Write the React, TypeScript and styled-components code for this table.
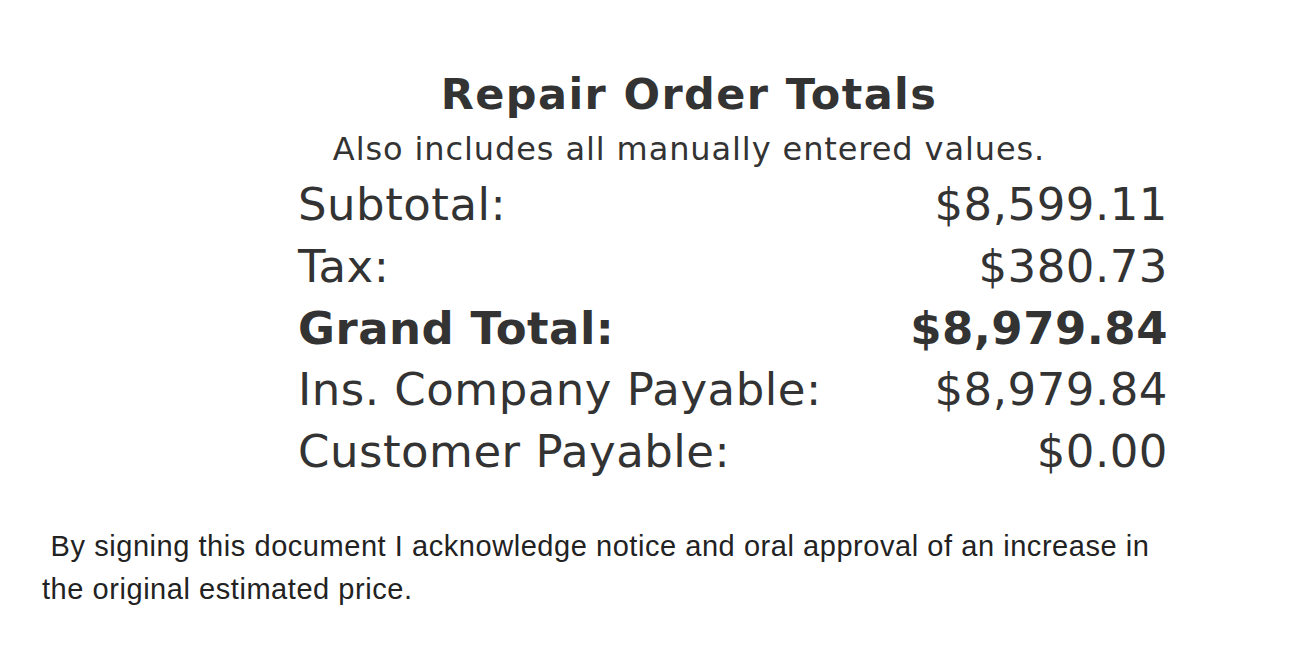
import React from 'react';
import styled, { createGlobalStyle } from 'styled-components';

const GlobalStyle = createGlobalStyle`
  html, body {
    margin: 0;
    padding: 0;
    background: #ffffff;
  }
`;

const rows = [
  { label: 'Subtotal:', value: '$8,599.11' },
  { label: 'Tax:', value: '$380.73' },
  { label: 'Grand Total:', value: '$8,979.84', bold: true },
  { label: 'Ins. Company Payable:', value: '$8,979.84' },
  { label: 'Customer Payable:', value: '$0.00' },
];

function App() {
  return (
    <>
      <GlobalStyle />
      <Page>
        <Totals>
          <Heading>
            <Title>Repair Order Totals</Title>
            <Subtitle>Also includes all manually entered values.</Subtitle>
          </Heading>
          <Table>
            {rows.map((r) => (
              <Row key={r.label} bold={r.bold}>
                <span>{r.label}</span>
                <span>{r.value}</span>
              </Row>
            ))}
          </Table>
        </Totals>
        <Notice>
          &nbsp;By signing this document I acknowledge notice and oral approval of an increase in the
          original estimated price.
        </Notice>
      </Page>
    </>
  );
}

export default App;

const Page = styled.div`
  display: flex;
  flex-direction: column;
  padding-top: 68px;
  padding-left: 42px;
  width: 1290px;
  box-sizing: border-box;
`;

const Totals = styled.div`
  display: flex;
  flex-direction: column;
  padding-left: 256px;
  font-family: 'DejaVu Sans', Verdana, sans-serif;
  color: #333333;
`;

const Heading = styled.div`
  display: flex;
  flex-direction: column;
  align-items: center;
  width: 782px;
`;

const Title = styled.h1`
  margin: 0;
  font-size: 43px;
  font-weight: bold;
  letter-spacing: 1.4px;
  line-height: 52px;
`;

const Subtitle = styled.div`
  margin-top: 5px;
  font-size: 32px;
  letter-spacing: 0.9px;
  line-height: 48px;
`;

const Table = styled.div`
  display: flex;
  flex-direction: column;
  width: 870px;
  margin-top: 1px;
`;

const Row = styled.div<{ bold?: boolean }>`
  display: flex;
  justify-content: space-between;
  font-size: 45px;
  letter-spacing: 0.5px;
  line-height: 61.75px;
  font-weight: ${(p) => (p.bold ? 'bold' : 'normal')};
`;

const Notice = styled.p`
  margin: 42px 0 0 0;
  width: 1125px;
  font-family: 'Liberation Sans', Arial, sans-serif;
  font-size: 29px;
  letter-spacing: 0.55px;
  line-height: 43px;
  color: #222222;
`;
